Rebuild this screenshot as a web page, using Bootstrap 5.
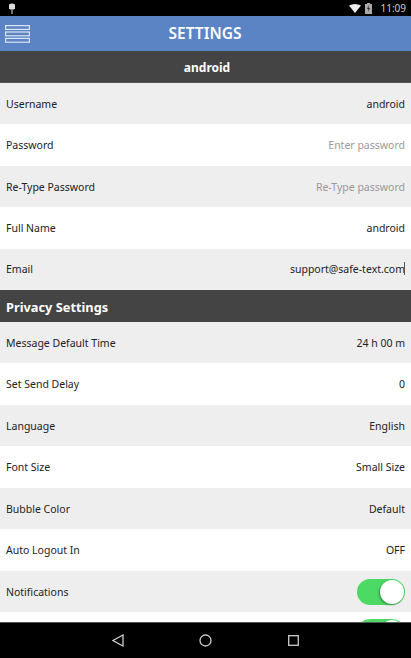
<!DOCTYPE html>
<html lang="en">
<head>
<meta charset="utf-8">
<title>Settings</title>
<link rel="stylesheet" href="https://cdn.jsdelivr.net/npm/bootstrap@5.3.0/dist/css/bootstrap.min.css">
<style>
html,body{height:100%;overflow:hidden;margin:0}
body{font-family:"Noto Sans","Open Sans",sans-serif;font-size:10.5px;color:#222;background:#fff}
.shell{height:658px;width:411px}
.statusbar{height:16px;background:#000;color:#ccc;font-size:10px;line-height:16px;padding:0 5px 0 8px}
.appbar{height:35px;background:#5b84c4;color:#fff;font-size:15.5px;font-weight:600;padding-left:5px}
.appbar .ttl{flex:1;text-align:center;padding-right:31px}
.userbar{height:32px;background:#444;color:#fff;font-size:12px;font-weight:700;border-bottom:1px solid #555;padding-top:3px;padding-left:3px}
.secbar{height:32px;background:#444;color:#fff;font-size:12.8px;font-weight:700;padding:3px 6px 0}
.scroller{flex:1;min-height:0;overflow:hidden}
.setrow{height:41.4px;padding:0 6px;background:#fff}
.secbar~.setrow{height:41.5px}
.setrow.alt{background:#eee}
.setrow>span:not(.tog){padding-top:2px}
.ph{color:#999}
.caret{display:inline-block;width:1px;height:13px;background:#555;margin-left:-1px;vertical-align:-2px}
.tog{width:48px;height:26px;border-radius:13px;background:#4cd964;position:relative}
.tog.up{margin-bottom:3px}
.tog::after{content:"";position:absolute;right:1px;top:1px;width:24px;height:24px;border-radius:50%;background:#fff;box-shadow:-1px 1px 2px rgba(0,0,0,.35)}
.navbottom{height:36px;background:#000;border-top:1px solid #555;padding-right:1px}
.navcell{width:187px}
</style>
</head>
<body>
<div class="shell d-flex flex-column">
  <div class="statusbar d-flex align-items-center justify-content-between">
    <svg width="8" height="11" viewBox="0 0 8 11"><path d="M1 1.500Q4 -.5 7 1.500V6Q4 7.500 1 6Z M3.500 7h1v4h-1z" fill="#ddd"/></svg>
    <div class="d-flex align-items-center">
      <svg width="12" height="9" viewBox="0 0 12 9"><path d="M0 1.500Q6 -1.500 12 1.500L6 9Z" fill="#eee"/></svg>
      <svg class="ms-1" width="7" height="11" viewBox="0 0 7 11"><path d="M2 0h3v1h2v10H0V1h2z" fill="#aaa"/><path d="M4 2 2 6h1.500L3 9 5 5H3.500z" fill="#222"/></svg>
      <span class="ms-1 ps-1">11:09</span>
    </div>
  </div>
  <div class="appbar d-flex align-items-center">
    <svg width="25" height="18" viewBox="0 0 25 18" fill="none" stroke="#dbe5f5" stroke-width="1.200"><rect x=".6" y=".6" width="23.800" height="3.800"/><rect x=".6" y="7" width="23.800" height="3.800"/><rect x=".6" y="13.400" width="23.800" height="3.800"/></svg>
    <div class="ttl">SETTINGS</div>
  </div>
  <div class="userbar d-flex align-items-center justify-content-center">android</div>
  <div class="scroller">
    <div class="setrow alt d-flex align-items-center justify-content-between"><span>Username</span><span>android</span></div>
    <div class="setrow d-flex align-items-center justify-content-between"><span>Password</span><span class="ph">Enter password</span></div>
    <div class="setrow alt d-flex align-items-center justify-content-between"><span>Re-Type Password</span><span class="ph">Re-Type password</span></div>
    <div class="setrow d-flex align-items-center justify-content-between"><span>Full Name</span><span>android</span></div>
    <div class="setrow alt d-flex align-items-center justify-content-between"><span>Email</span><span>support@safe-text.com<i class="caret"></i></span></div>
    <div class="secbar d-flex align-items-center">Privacy Settings</div>
    <div class="setrow alt d-flex align-items-center justify-content-between"><span>Message Default Time</span><span>24 h 00 m</span></div>
    <div class="setrow d-flex align-items-center justify-content-between"><span>Set Send Delay</span><span>0</span></div>
    <div class="setrow alt d-flex align-items-center justify-content-between"><span>Language</span><span>English</span></div>
    <div class="setrow d-flex align-items-center justify-content-between"><span>Font Size</span><span>Small Size</span></div>
    <div class="setrow alt d-flex align-items-center justify-content-between"><span>Bubble Color</span><span>Default</span></div>
    <div class="setrow d-flex align-items-center justify-content-between"><span>Auto Logout In</span><span>OFF</span></div>
    <div class="setrow alt d-flex align-items-center justify-content-between"><span>Notifications</span><span class="tog"></span></div>
    <div class="setrow d-flex align-items-center justify-content-end"><span class="tog up"></span></div>
  </div>
  <div class="navbottom d-flex align-items-center justify-content-center">
    <div class="navcell d-flex align-items-center justify-content-between">
      <svg width="12" height="13" viewBox="0 0 12 13" fill="none" stroke="#ccc" stroke-width="1.300"><path d="M11 1 1 6.500 11 12Z"/></svg>
      <svg width="13" height="13" viewBox="0 0 13 13" fill="none" stroke="#ccc" stroke-width="1.300"><circle cx="6.500" cy="6.500" r="5.500"/></svg>
      <svg width="11" height="11" viewBox="0 0 11 11" fill="none" stroke="#ccc" stroke-width="1.300"><rect x=".7" y=".7" width="9.600" height="9.600"/></svg>
    </div>
  </div>
</div>
<script src="https://cdn.jsdelivr.net/npm/bootstrap@5.3.0/dist/js/bootstrap.bundle.min.js"></script>
</body>
</html>
